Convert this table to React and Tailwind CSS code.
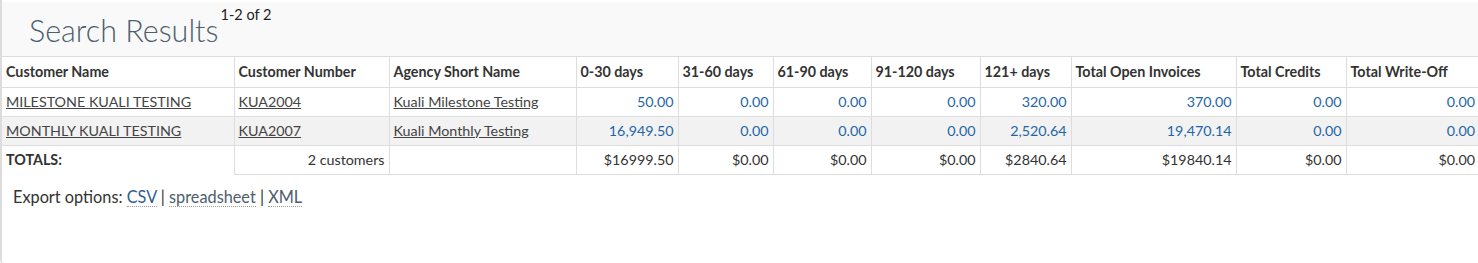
import React from "react";

const rows = [
  {
    name: "MILESTONE KUALI TESTING",
    number: "KUA2004",
    agency: "Kuali Milestone Testing",
    values: ["50.00", "0.00", "0.00", "0.00", "320.00", "370.00", "0.00", "0.00"],
  },
  {
    name: "MONTHLY KUALI TESTING",
    number: "KUA2007",
    agency: "Kuali Monthly Testing",
    values: ["16,949.50", "0.00", "0.00", "0.00", "2,520.64", "19,470.14", "0.00", "0.00"],
  },
];

const totals = ["$16999.50", "$0.00", "$0.00", "$0.00", "$2840.64", "$19840.14", "$0.00", "$0.00"];

const headers = [
  "Customer Name",
  "Customer Number",
  "Agency Short Name",
  "0-30 days",
  "31-60 days",
  "61-90 days",
  "91-120 days",
  "121+ days",
  "Total Open Invoices",
  "Total Credits",
  "Total Write-Off",
];

const widths = [232, 155, 187, 102, 95, 98, 109, 91, 165, 110, 133];

const App = () => {
  return (
    <div
      className="w-[1478px] h-[263px] overflow-hidden bg-white text-[#333] border-l-2 border-[#dcdcdc] rounded-bl-[3px]"
      style={{ fontFamily: "Lato, 'Open Sans', sans-serif" }}
    >
      {/* Header */}
      <div className="mt-[2px] h-[55px] bg-[#f9f9f9] border-b border-[#dddddd] flex items-start">
        <h1 className="ml-[27px] mt-[9px] text-[30.5px] leading-[38px] font-light text-[#4d5e6e]">
          Search Results
        </h1>
        <span className="ml-[2px] mt-[4px] text-[14.5px] leading-[18px] text-[#222]">1-2 of 2</span>
      </div>

      {/* Results table */}
      <table className="table-fixed border-collapse w-[1476px] text-[14.3px] leading-[20px]">
        <colgroup>
          {widths.map((w, i) => (
            <col key={i} style={{ width: w }} />
          ))}
        </colgroup>
        <thead>
          <tr className="h-[30px]">
            {headers.map((h, i) => (
              <th
                key={h}
                className={`text-left font-bold px-[4px] text-[#333] border-b border-[#dddddd] ${
                  i > 0 ? "border-l" : ""
                }`}
              >
                {h}
              </th>
            ))}
          </tr>
        </thead>
        <tbody>
          {rows.map((r, idx) => (
            <tr
              key={r.number}
              className={`h-[29px] ${idx === 1 ? "bg-[#f2f2f2]" : "bg-white"}`}
            >
              <td className="px-[4px] border-b border-[#dddddd]">
                <a href="#" className="underline text-[#444]">
                  {r.name}
                </a>
              </td>
              <td className="px-[4px] border-b border-l border-[#dddddd]">
                <a href="#" className="underline text-[#444]">
                  {r.number}
                </a>
              </td>
              <td className="px-[4px] border-b border-l border-[#dddddd]">
                <a href="#" className="underline text-[#444]">
                  {r.agency}
                </a>
              </td>
              {r.values.map((v, i) => (
                <td
                  key={i}
                  className="px-[4px] text-right text-[#1f66a8] border-b border-l border-[#dddddd]"
                >
                  {v}
                </td>
              ))}
            </tr>
          ))}
          <tr className="h-[29px]">
            <td className="px-[4px] font-bold">TOTALS:</td>
            <td className="px-[4px] text-right border-b border-l border-[#dddddd]">
              2 customers
            </td>
            <td className="px-[4px] border-b border-l border-[#dddddd]"></td>
            {totals.map((t, i) => (
              <td
                key={i}
                className="px-[4px] text-right border-b border-l border-[#dddddd]"
              >
                {t}
              </td>
            ))}
          </tr>
        </tbody>
      </table>

      {/* Export */}
      <div className="ml-[11px] mt-[12px] text-[16.3px] leading-[20px] text-[#333]">
        Export options:{" "}
        <a href="#" className="text-[#2f5f8f] border-b border-dotted border-[#999]">
          CSV
        </a>{" "}
        |{" "}
        <a href="#" className="text-[#4d5e6e] border-b border-dotted border-[#999]">
          spreadsheet
        </a>{" "}
        |{" "}
        <a href="#" className="text-[#4d5e6e] border-b border-dotted border-[#999]">
          XML
        </a>
      </div>
    </div>
  );
};

export default App;
